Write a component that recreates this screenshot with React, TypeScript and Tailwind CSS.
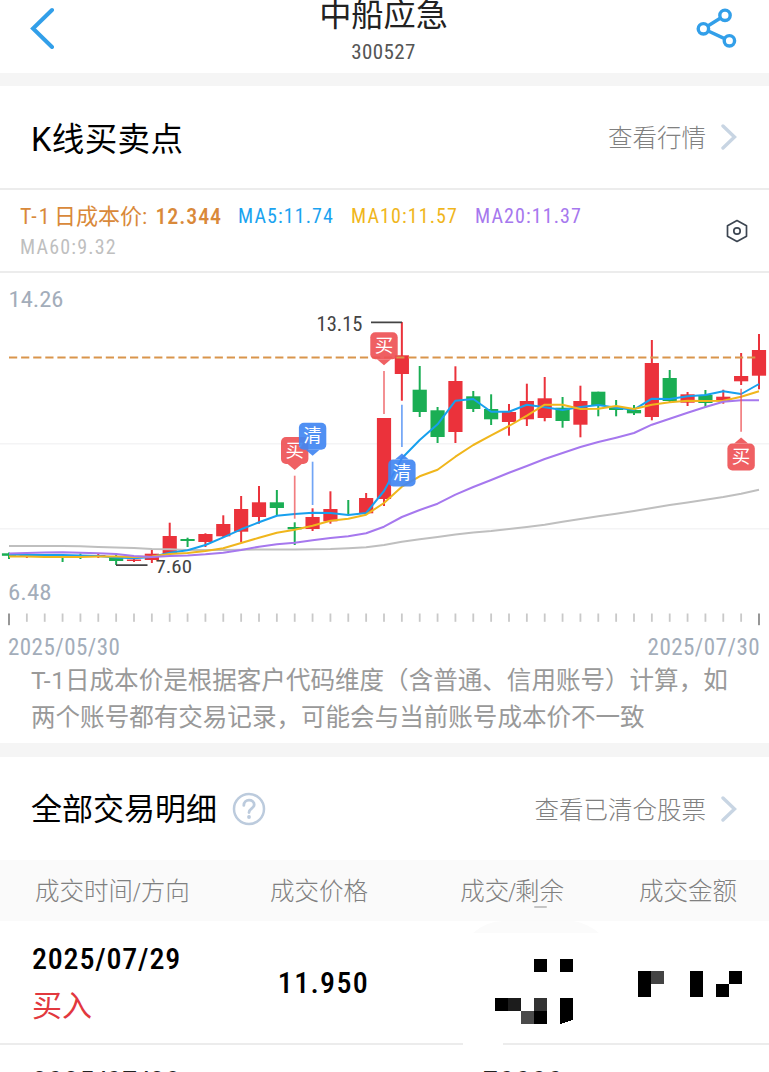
/**
 * TradePointsPage — K-line chart with buy/sell points and the trade list of one stock.
 */

import type { ReactNode } from 'react';

interface Candle {
  open: number;
  close: number;
  high: number;
  low: number;
  up: boolean;
}

interface MarkerProps {
  x: number;
  top: number;
  label: string;
  tone: 'buy' | 'clear';
  direction: 'up' | 'down';
  lineFrom: number;
  lineTo: number;
}

const FIRST_X = 9;
const STEP = 17.857;
const RED = '#eb323b';
const GREEN = '#1aae54';

const xAt = (index: number) => FIRST_X + index * STEP;

// [body top, body bottom, wick top, wick bottom, rising]
const candleRows: [number, number, number, number, number][] = [
  [553.3, 555.8, 552.5, 559, 0],
  [555, 556, 553.5, 558, 1],
  [555, 556.2, 554, 557, 0],
  [556.5, 558, 556, 562, 0],
  [555.5, 556.7, 553.5, 559, 0],
  [555, 556, 553, 558, 1],
  [557.5, 561, 553.5, 565, 0],
  [559.5, 561, 558, 562, 1],
  [553.7, 560, 550, 563, 1],
  [536, 554, 522.7, 555, 1],
  [539, 541, 537.7, 547, 0],
  [534, 542, 533.3, 547, 1],
  [524, 536.3, 515.3, 537, 1],
  [509, 531.7, 496, 542, 1],
  [502.3, 517, 486, 523.7, 1],
  [502.3, 508, 490, 515, 0],
  [527, 529.3, 522.3, 545, 0],
  [517, 529, 508.3, 531, 1],
  [509, 521.3, 491.3, 523.7, 1],
  [514, 515, 500, 515, 0],
  [498, 513.3, 493, 513.3, 1],
  [418, 499, 418, 506, 1],
  [355.3, 374, 322, 400.7, 1],
  [389.7, 412, 366, 417, 0],
  [410.3, 437, 407, 443, 0],
  [381, 432, 366.3, 443, 1],
  [396.3, 409, 391, 412, 0],
  [409, 419.3, 394.3, 425, 0],
  [412, 422, 404, 435.7, 1],
  [401, 419.3, 383.7, 426, 1],
  [398.3, 418, 377, 421.3, 1],
  [407.7, 421, 397, 427.7, 0],
  [401, 424.7, 385.7, 437.3, 1],
  [391.7, 405.7, 391.7, 416.3, 0],
  [407.3, 410, 400, 416.3, 0],
  [410, 413.3, 405, 415, 0],
  [363, 417, 340, 420.3, 1],
  [378, 401, 370, 402, 0],
  [394.3, 402.7, 392, 406, 1],
  [395, 403, 390, 407.3, 0],
  [396.7, 401.3, 389.7, 403.7, 1],
  [376, 381.3, 353, 385, 1],
  [350, 375.7, 334, 389.3, 1],
];

const candles: Candle[] = candleRows.map(([open, close, high, low, up]) => ({
  open,
  close,
  high,
  low,
  up: up === 1,
}));

const averages = [
  {
    name: 'MA60',
    color: '#bfbfbf',
    points: [
      546, 546, 546, 546, 546.3, 547, 547.5, 548, 549, 549.3, 550, 550, 550, 549.7, 549.5, 549.5,
      549.5, 549.3, 549, 548.3, 547.3, 545, 541.7, 539.3, 537, 534.5, 532.5, 531, 529, 527, 524.7,
      521.7, 519, 516.3, 513.7, 511, 508, 505, 502.5, 499.7, 497, 493.7, 489.7,
    ],
  },
  {
    name: 'MA5',
    color: '#17a0ee',
    points: [
      554.5, 555, 555, 555, 555.5, 556, 557.5, 558.3, 557, 552.7, 550.3, 545, 537.3, 529.3, 522.3,
      515.7, 514, 512.7, 513, 515, 513, 491, 458.3, 440, 424.3, 400.7, 399, 411.7, 411.7, 404.7,
      407.3, 410, 407, 405, 407.7, 409.7, 398.7, 399, 396.3, 395, 391.3, 394, 384,
    ],
  },
  {
    name: 'MA10',
    color: '#f0b61c',
    points: [
      556.5, 556.5, 557, 557, 557, 556.5, 556.5, 557, 556.5, 554, 553, 551, 548.3, 543, 537.7,
      532.7, 529.7, 525.7, 520.7, 518.7, 514.7, 503, 486.7, 476.3, 469.7, 456.7, 445, 435.3, 426,
      415.7, 404.7, 404.7, 409, 408.7, 406, 409, 404.7, 402.3, 400.7, 401, 400.7, 396.7, 391.3,
    ],
  },
  {
    name: 'MA20',
    color: '#a678ee',
    points: [
      553.5, 553, 552.5, 552.3, 552.7, 553.3, 554, 556, 557, 556, 555.5, 554.3, 552.7, 550, 546.7,
      544.3, 542.7, 540.3, 538, 536.3, 533.3, 526.7, 517, 510, 503.7, 494.7, 487, 480, 472.7, 466,
      459, 453, 447, 442, 437.7, 433, 424.7, 418.7, 412.7, 407, 401.7, 400.3, 400.3,
    ],
  },
];

const markers: MarkerProps[] = [
  { x: 294.7, top: 437, label: '买', tone: 'buy', direction: 'down', lineFrom: 475.7, lineTo: 518.7 },
  { x: 312.6, top: 422.7, label: '清', tone: 'clear', direction: 'down', lineFrom: 461.7, lineTo: 505 },
  { x: 384, top: 332.2, label: '买', tone: 'buy', direction: 'down', lineFrom: 371, lineTo: 414 },
  { x: 401.9, top: 459.5, label: '清', tone: 'clear', direction: 'up', lineFrom: 404.7, lineTo: 447 },
  { x: 741.1, top: 443.5, label: '买', tone: 'buy', direction: 'up', lineFrom: 388.7, lineTo: 431.7 },
];

function Marker({ x, top, label, tone, direction, lineFrom, lineTo }: MarkerProps) {
  const fill = tone === 'buy' ? '#ee5356' : '#4287f3';
  const bottom = top + 27;
  const pointer =
    direction === 'down'
      ? `M${x - 7} ${bottom}L${x} ${bottom + 6}L${x + 7} ${bottom}Z`
      : `M${x - 7} ${top}L${x} ${top - 6}L${x + 7} ${top}Z`;

  return (
    <g>
      <line x1={x} x2={x} y1={lineFrom} y2={lineTo} stroke={fill} strokeWidth="1.7" opacity="0.75" />
      <g opacity="0.92">
        <rect x={x - 13.7} y={top} width="27.4" height="27" rx="5" fill={fill} />
        <path d={pointer} fill={fill} />
      </g>
      <text x={x} y={top + 19.6} textAnchor="middle" fontSize="18.5" fill="#fff">
        {label}
      </text>
    </g>
  );
}

function KLineChart() {
  return (
    <svg
      viewBox="0 274 769 354"
      className="block h-[354px] w-[769px] font-[Roboto,'Noto_Sans_CJK_SC',sans-serif] [font-stretch:85%]"
    >
      {/* Grid */}
      <path d="M0 443.7H769M0 528.7H769" stroke="#f4f4f5" strokeWidth="1.5" />

      {/* Candles */}
      {candles.map((candle, i) => (
        <g key={i} fill={candle.up ? RED : GREEN}>
          <rect x={xAt(i) - 1} y={candle.high} width="2" height={candle.low - candle.high} />
          <rect
            x={xAt(i) - 7.1}
            y={candle.open}
            width="14.2"
            height={candle.close - candle.open}
          />
        </g>
      ))}

      {/* Cost price */}
      <path d="M9 357.4H759" stroke="#d9954c" strokeWidth="2" strokeDasharray="8.2 3.9" />

      {/* Moving averages */}
      {averages.map((line) => (
        <polyline
          key={line.name}
          points={line.points.map((y, i) => `${xAt(i)},${y}`).join(' ')}
          fill="none"
          stroke={line.color}
          strokeWidth="2"
          strokeLinejoin="round"
        />
      ))}

      {/* Extremes */}
      <path d="M371 322.3H402M116 565.2H147.5" stroke="#444" strokeWidth="1.7" />
      <text x="316.5" y="330.7" fontSize="19.5" fill="#444" textLength="46" lengthAdjust="spacingAndGlyphs">
        13.15
      </text>
      <text x="155.5" y="573" fontSize="19" fill="#444" textLength="36.5" lengthAdjust="spacingAndGlyphs">
        7.60
      </text>

      {/* Axis */}
      <text x="8.5" y="306.5" fontSize="22.5" fill="#a3adba" textLength="55" lengthAdjust="spacingAndGlyphs">
        14.26
      </text>
      <text x="8" y="600" fontSize="22.5" fill="#a3adba" textLength="43.5" lengthAdjust="spacingAndGlyphs">
        6.48
      </text>
      {candles.map((_, i) => {
        const edge = i === 0 || i === candles.length - 1;
        return (
          <rect
            key={i}
            x={xAt(i) - 0.9}
            y="613.5"
            width="1.8"
            height={edge ? 11.7 : 8.3}
            fill={edge ? '#8c8c8c' : '#c9c9c9'}
          />
        );
      })}

      {markers.map((marker) => (
        <Marker key={marker.x} {...marker} />
      ))}
    </svg>
  );
}

function Chevron() {
  return (
    <svg viewBox="0 0 16 26" className="ml-[15px] h-[26px] w-4" fill="none">
      <path d="M2 2L13.5 13L2 24" stroke="#c8d5e3" strokeWidth="3.4" strokeLinecap="round" />
    </svg>
  );
}

function MoreLink({ children }: { children: ReactNode }) {
  return (
    <div className="flex items-center text-[24.5px] leading-9 font-light text-[#808080]">
      <span className="pt-1">{children}</span>
      <Chevron />
    </div>
  );
}

function VolumeMosaic() {
  return (
    <svg viewBox="0 0 78 65" className="h-[65px] w-[78px]" shapeRendering="crispEdges">
      <path d="M39 0h13v13H39zM65 0h13v13H65zM0 39h13v13H0zM39 52h13v13H39zM65 39h13v22l-13 4z" fill="#000" />
      <path d="M13 39h13v13H13z" fill="#1c1c1c" />
      <path d="M39 39h13v13H39z" fill="#333" />
      <path d="M26 52h13v13H26z" fill="#4a4a4a" />
    </svg>
  );
}

function AmountMosaic() {
  return (
    <svg viewBox="0 0 104 26" className="h-[26px] w-[104px]" shapeRendering="crispEdges">
      <path d="M0 0h13v26H0zM52 0h13v26H52zM91 0h13v13H91zM78 13h13v13H78z" fill="#000" />
      <path d="M13 0h13v13H13z" fill="#444" />
    </svg>
  );
}

export default function App() {
  return (
    <div className="h-[1072px] w-[769px] overflow-hidden bg-white font-[Roboto,'Noto_Sans_CJK_SC',sans-serif] [font-stretch:85%]">
      {/* Header */}
      <header className="flex h-[73px] items-start justify-between pr-[31px] pl-[29px]">
        <svg viewBox="0 0 26 42" className="mt-[7px] h-[42px] w-[26px]" fill="none">
          <path d="M23 3L4 21.5L23 40" stroke="#329fe9" strokeWidth="4" strokeLinecap="round" />
        </svg>
        <div className="flex flex-col items-center pl-4">
          <h1 className="-mt-2 text-[32.2px] leading-[46px] text-[#222]">中船应急</h1>
          <p className="mt-0.5 text-[21px] leading-6 tracking-[0.4px] text-[#555]">300527</p>
        </div>
        <svg viewBox="0 0 42 42" className="mt-[7px] h-[42px] w-[42px]" fill="none" stroke="#329fe9" strokeWidth="3.4">
          <circle cx="29" cy="8.3" r="5.2" />
          <circle cx="7.4" cy="21.8" r="5.2" />
          <circle cx="33.4" cy="33.8" r="5.2" />
          <path d="M11.8 19L24.6 11M12.2 24L28.6 31.6" />
        </svg>
      </header>

      <div className="h-[12.5px] bg-[#f5f5f5]" />

      {/* K-line title */}
      <section className="flex h-[102.5px] items-center justify-between pr-8 pl-[31px]">
        <h2 className="pt-1.5 text-[32.5px] leading-[46px] tracking-[0.4px] text-black [font-stretch:100%]">
          K线买卖点
        </h2>
        <MoreLink>查看行情</MoreLink>
      </section>

      {/* Averages legend */}
      <section className="flex h-[85px] items-center justify-between border-y-2 border-[#ececec] pr-5 pl-5">
        <div className="pt-0.5">
          <div className="flex items-center text-[20px] leading-[31px] tracking-[1.1px]">
            <span className="mr-[17px] flex w-[201px] justify-between text-[22px] tracking-normal whitespace-nowrap text-[#d9893a]">
              <span>
                <span className="inline-block w-[34px] tracking-[2.2px]">T-1</span>日成本价:
              </span>
              <span className="-mr-px font-medium tracking-[0.9px]">12.344</span>
            </span>
            <span className="mr-[17px] w-24 text-[#1aa3f0]">MA5:11.74</span>
            <span className="mr-[17px] w-[107px] text-[#f0b61c]">MA10:11.57</span>
            <span className="text-[#a678ee]">MA20:11.37</span>
          </div>
          <div className="text-[20px] leading-[31px] tracking-[1.2px] text-[#bfbfbf]">MA60:9.32</div>
        </div>
        <svg viewBox="0 0 24 24" className="h-6 w-6" fill="none" stroke="#3d4652" strokeWidth="1.7">
          <path d="M12 1.6L21.5 6.8V17.2L12 22.4L2.5 17.2V6.8Z" strokeLinejoin="round" />
          <circle cx="12" cy="12" r="3.2" />
        </svg>
      </section>

      {/* Chart */}
      <section className="mt-px">
        <KLineChart />
        <div className="flex justify-between pt-[5px] pr-[9px] pl-2 text-[23px] leading-[29px] tracking-[0.45px] text-[#a3adba]">
          <span>2025/05/30</span>
          <span>2025/07/30</span>
        </div>
        <p className="h-[81px] pl-[31px] text-[24.55px] leading-[37px] whitespace-nowrap text-[#999]">
          <span className="inline-block w-[34px] tracking-[0.8px] [font-stretch:100%]">T-1</span>
          日成本价是根据客户代码维度（含普通、信用账号）计算，如
          <br />
          两个账号都有交易记录，可能会与当前账号成本价不一致
        </p>
      </section>

      <div className="h-[14px] bg-[#f5f5f5]" />

      {/* Trades title */}
      <section className="flex h-[103px] items-center justify-between pr-8 pl-[31px]">
        <div className="flex items-center gap-[15px]">
          <h2 className="pt-0.5 text-[31px] leading-[46px] text-black">全部交易明细</h2>
          <svg viewBox="0 0 34 34" className="h-[34px] w-[34px]" fill="none" stroke="#bccbdd">
            <circle cx="17" cy="17" r="15" strokeWidth="2.5" />
            <path d="M11.8 13.4C11.8 6.4 22.2 6.6 22.2 12.7C22.2 16.4 17 16.2 17 20.6" strokeWidth="2.8" strokeLinecap="round" />
            <circle cx="17" cy="25" r="1.9" fill="#bccbdd" stroke="none" />
          </svg>
        </div>
        <MoreLink>查看已清仓股票</MoreLink>
      </section>

      {/* Table head */}
      <div className="grid h-[61px] grid-cols-[184px_152px_196px_173px] items-center bg-[#fafafa] pt-1 pl-8 text-right text-[24.5px] font-light text-[#808080]">
        <span className="pl-[3px] text-left">
          成交时间<span className="-mx-[0.5px]">/</span>方向
        </span>
        <span>成交价格</span>
        <span className="relative">
          成交<span className="-mx-[1.5px]">/</span>剩余
          <i className="absolute right-[17px] bottom-[3px] h-[2px] w-[13px] rounded-full bg-[#c4c4c4]" />
        </span>
        <span>成交金额</span>
      </div>

      {/* Trade row */}
      <div className="relative grid h-[122px] grid-cols-[184px_152px_205px_170px] items-center pl-8">
        <svg viewBox="0 0 126 12" className="absolute top-0 left-[473px] h-3 w-[126px]">
          <path d="M0 12Q14 0 30 0H100Q114 2 126 12Z" fill="#fbfbfb" />
        </svg>
        <div className="pt-[3px]">
          <div className="text-[30px] leading-[44px] font-medium tracking-[0.8px] text-black">2025/07/29</div>
          <div className="text-[30px] leading-[50px] text-[#e2383e]">买入</div>
        </div>
        <div className="-mr-px text-right text-[30px] font-medium tracking-[1.3px] text-black">11.950</div>
        <div className="flex justify-end pt-[18px]">
          <VolumeMosaic />
        </div>
        <div className="flex justify-end pt-1 pr-px">
          <AmountMosaic />
        </div>
      </div>

      {/* Divider broken under the volume column */}
      <div className="flex h-[2px] justify-between">
        <div className="w-[463px] bg-[#ececec]" />
        <div className="w-[266px] bg-[#ececec]" />
      </div>

      <div className="grid grid-cols-[184px_152px_196px] pt-[15px] pl-8 text-[30px] leading-[44px] font-medium text-[#222]">
        <span className="tracking-[0.8px]">2025/07/28</span>
        <span />
        <span className="text-right tracking-[1.2px]">70000</span>
      </div>
    </div>
  );
}
